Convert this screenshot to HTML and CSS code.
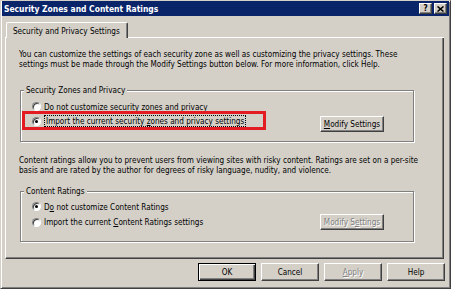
FILE: index.html
```html
<!DOCTYPE html>
<html>
<head>
<meta charset="utf-8">
<title>Security Zones and Content Ratings</title>
<link rel="stylesheet" href="styles.css">
</head>
<body>
<div class="window">
  <div class="titlebar">
    <span class="title">Security Zones and Content Ratings</span>
    <div class="caption-buttons">
      <span class="cbtn cbtn-help">?</span>
      <span class="cbtn"><svg width="7" height="6" viewBox="0 0 7 6"><path d="M0.5 0.5 L6.5 5.5 M6.5 0.5 L0.5 5.5" stroke="#000" stroke-width="1.6" fill="none"/></svg></span>
    </div>
  </div>
  <div class="tabs">
    <span class="tab-lead"></span>
    <div class="tab">Security and Privacy Settings</div>
    <span class="tab-fill"></span>
  </div>
  <div class="panel">
    <p class="desc">You can customize the settings of each security zone as well as customizing the privacy settings. These<br>settings must be made through the Modify Settings button below. For more information, click Help.</p>
    <fieldset class="group group-zones">
      <legend>Security Zones and Privacy</legend>
      <div class="radio-row first"><span class="radio"></span><span>Do not customize security zones and privacy</span></div>
      <div class="row">
        <div class="highlight">
          <div class="radio-row inner"><span class="radio checked"></span><span class="focus">Import the current security <u>z</u>ones and privacy settings</span></div>
        </div>
        <button class="btn btn-modify"><u>M</u>odify Settings</button>
      </div>
    </fieldset>
    <p class="desc desc-ratings">Content ratings allow you to prevent users from viewing sites with risky content. Ratings are set on a per-site<br>basis and are rated by the author for degrees of risky language, nudity, and violence.</p>
    <fieldset class="group group-ratings">
      <legend>Content Ratings</legend>
      <div class="radio-row first"><span class="radio checked"></span><span>D<u>o</u> not customize Content Ratings</span></div>
      <div class="row row-center">
        <div class="radio-row"><span class="radio"></span><span>Import the current <u>C</u>ontent Ratings settings</span></div>
        <button class="btn btn-modify disabled" disabled>Modify S<u>e</u>ttings</button>
      </div>
    </fieldset>
  </div>
  <div class="actions">
    <button class="btn btn-action default">OK</button>
    <button class="btn btn-action">Cancel</button>
    <button class="btn btn-action disabled" disabled><u>A</u>pply</button>
    <button class="btn btn-action">Help</button>
  </div>
</div>
</body>
</html>
```

FILE: styles.css
```css
* { box-sizing: border-box; }

html, body {
  margin: 0;
  padding: 0;
  background: #d4d0c8;
}

body {
  font-family: "DejaVu Sans Condensed", "DejaVu Sans", sans-serif;
  font-size: 8.1px;
  color: #000;
}

.window {
  width: 451px;
  height: 289px;
  background: #d4d0c8;
  border: 1px solid;
  border-color: #d4d0c8 #404040 #404040 #d4d0c8;
  box-shadow: inset 1px 1px 0 #fff, inset -1px -1px 0 #808080;
  padding: 0 1px;
}

.titlebar {
  height: 15px;
  background: #0a246a;
  display: flex;
  align-items: center;
  padding: 0 2px 0 2px;
  color: #fff;
  font-weight: bold;
  font-size: 8.45px;
}

.caption-buttons {
  margin-left: auto;
  display: flex;
  gap: 2px;
}

.cbtn {
  width: 13px;
  height: 11px;
  background: #d4d0c8;
  border: 1px solid;
  border-color: #fff #404040 #404040 #fff;
  box-shadow: inset -1px -1px 0 #808080;
  display: flex;
  align-items: center;
  justify-content: center;
  color: #000;
  font-size: 8px;
  line-height: 1;
}

.tabs {
  display: flex;
  height: 16px;
  margin: 6px 0 0 3px;
  width: 439px;
}

.tab-lead {
  width: 1px;
  border-bottom: 1px solid #fff;
}

.tab {
  width: 122px;
  border: 1px solid;
  border-bottom: none;
  border-color: #fff #404040 transparent #fff;
  border-radius: 2px 2px 0 0;
  box-shadow: inset -1px 0 0 #808080;
  padding-left: 6px;
  display: flex;
  align-items: center;
  white-space: nowrap;
}

.tab-fill {
  flex: 1;
  border-bottom: 1px solid #fff;
}

.panel {
  margin-left: 3px;
  width: 439px;
  height: 221px;
  border: 1px solid;
  border-top: none;
  border-color: transparent #404040 #404040 #fff;
  box-shadow: inset -1px -1px 0 #808080;
  padding: 11px 0 0 13px;
}

.desc {
  margin: 0;
  line-height: 10px;
  white-space: nowrap;
}

.desc-ratings {
  margin-top: 13px;
}

.group {
  margin: 16px 0 0 1px;
  width: 394px;
  border: 1px solid #808080;
  box-shadow: inset 1px 1px 0 #fff, 1px 1px 0 #fff;
  padding: 0 0 9px 1px;
}

.group-ratings {
  margin-top: 11px;
  padding-bottom: 11px;
}

.group legend {
  margin-left: 2px;
  padding: 0 2px;
  line-height: 10px;
  background: #d4d0c8;
}

.radio-row {
  display: flex;
  align-items: center;
  height: 9px;
  padding-left: 10px;
  white-space: nowrap;
}

.radio-row.first {
  margin-top: 7px;
}

.group-ratings .radio-row.first {
  margin-top: 6px;
}

.radio-row.inner {
  padding-left: 7px;
  height: 12px;
}

.radio {
  width: 9px;
  height: 9px;
  border-radius: 50%;
  background: #fff;
  border: 1px solid;
  border-color: #808080 #fff #fff #808080;
  box-shadow: inset 1px 1px 0 #404040, 0 0 0 0.5px #d4d0c8;
  flex: none;
  margin-right: 3px;
  display: flex;
  align-items: center;
  justify-content: center;
}

.radio.checked::after {
  content: "";
  width: 3px;
  height: 3px;
  border-radius: 50%;
  background: #000;
}

.row {
  display: flex;
  align-items: flex-start;
}

.row-center {
  align-items: center;
  margin-top: 3px;
}

.highlight {
  width: 244px;
  height: 19px;
  border: 3px solid #e31b23;
  padding-top: 1px;
}

.focus {
  border: 1px dotted #000;
  padding: 0 1px;
  line-height: 10px;
}

.btn {
  font-family: inherit;
  font-size: inherit;
  color: #000;
  background: #d4d0c8;
  border: 1px solid;
  border-color: #fff #404040 #404040 #fff;
  box-shadow: inset -1px -1px 0 #808080;
  padding: 0;
  margin: 0;
  display: flex;
  align-items: center;
  justify-content: center;
  white-space: nowrap;
}

.btn-modify {
  width: 64px;
  height: 16px;
  margin-left: auto;
  margin-right: 29px;
}

.row .btn-modify {
  margin-top: 5px;
}

.row-center .btn-modify {
  margin-top: 0;
}

.btn.disabled {
  color: #808080;
  text-shadow: 1px 1px 0 #fff;
}

.actions {
  display: flex;
  justify-content: flex-end;
  gap: 5px;
  margin-top: 4px;
  padding-right: 4px;
}

.btn-action {
  width: 58px;
  height: 18px;
}

.btn.default {
  border: 1px solid #000;
  box-shadow: inset 1px 1px 0 #fff, inset -1px -1px 0 #404040, inset -2px -2px 0 #808080;
}
```
